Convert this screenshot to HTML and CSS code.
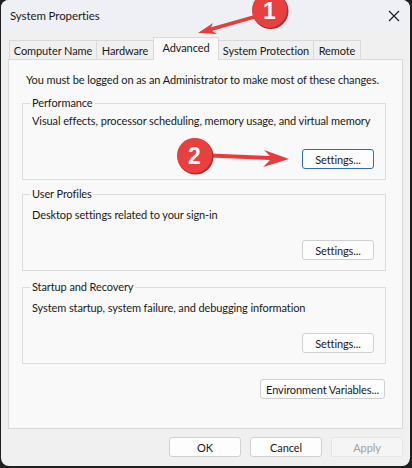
FILE: index.html
```html
<!DOCTYPE html>
<html lang="en">
<head>
    <meta charset="UTF-8">
    <meta name="viewport" content="width=device-width, initial-scale=1.0">
    <title>System Properties</title>
    <link rel="stylesheet" href="styles.css">
</head>
<body>

    <!-- Окно свойств системы -->
    <div class="window">
        <div class="titlebar">
            <span class="title">System Properties</span>
            <svg class="close" width="12" height="12" viewBox="0 0 12 12">
                <path d="M1 1 L11 11 M11 1 L1 11" stroke="#1a1a1a" stroke-width="1.1" fill="none"/>
            </svg>
        </div>

        <!-- Вкладки -->
        <div class="tabs">
            <div class="tab tab-name">Computer Name</div>
            <div class="tab tab-hw">Hardware</div>
            <div class="tab tab-active">Advanced</div>
            <div class="tab tab-prot">System Protection</div>
            <div class="tab tab-remote">Remote</div>
        </div>

        <div class="panel">
            <p class="note">You must be logged on as an Administrator to make most of these changes.</p>

            <fieldset class="group">
                <legend>Performance</legend>
                <p class="desc">Visual effects, processor scheduling, memory usage, and virtual memory</p>
                <div class="group-actions">
                    <button class="btn btn-focus">Settings...</button>
                </div>
            </fieldset>

            <fieldset class="group">
                <legend>User Profiles</legend>
                <p class="desc">Desktop settings related to your sign-in</p>
                <div class="group-actions">
                    <button class="btn">Settings...</button>
                </div>
            </fieldset>

            <fieldset class="group">
                <legend>Startup and Recovery</legend>
                <p class="desc">System startup, system failure, and debugging information</p>
                <div class="group-actions">
                    <button class="btn">Settings...</button>
                </div>
            </fieldset>

            <div class="env-row">
                <button class="btn btn-wide">Environment Variables...</button>
            </div>
        </div>

        <div class="footer">
            <button class="btn">OK</button>
            <button class="btn">Cancel</button>
            <button class="btn" disabled>Apply</button>
        </div>

        <!-- Пометки поверх окна -->
        <svg class="marks" width="412" height="468" viewBox="0 0 412 468">
            <g class="mark">
                <line x1="254" y1="17" x2="210" y2="29.5" stroke="#e53c3c" stroke-width="3.5" stroke-linecap="round"/>
                <polygon points="198,33 213,23 210,29.5 217,34" fill="#e53c3c"/>
                <circle cx="270.5" cy="11" r="18" fill="#b62a2a"/>
                <circle cx="269.5" cy="10" r="17.5" fill="#e8403f"/>
                <text x="269.5" y="19" class="mark-num">1</text>
            </g>
            <g class="mark">
                <line x1="210" y1="155.5" x2="276" y2="158.3" stroke="#e53c3c" stroke-width="4" stroke-linecap="round"/>
                <polygon points="289,159 264,150 272,158 263,167" fill="#e53c3c"/>
                <circle cx="195.5" cy="156.5" r="18" fill="#b62a2a"/>
                <circle cx="194.5" cy="155.5" r="17.5" fill="#e8403f"/>
                <text x="194.5" y="164" class="mark-num">2</text>
            </g>
        </svg>
    </div>

</body>
</html>
```

FILE: styles.css
```css
/* Общие стили */
body {
    margin: 0;
    padding: 0 2px 2px 1px;
    background: #1f1f1f;
    font-family: Lato, sans-serif;
    font-size: 11px;
    letter-spacing: -0.1px;
    color: #1a1a1a;
}
.window {
    position: relative;
    height: 466px;
    background: #f0f0f0;
    border-radius: 8px;
    overflow: hidden;
    white-space: nowrap;
}
/* Заголовок окна */
.titlebar {
    height: 31px;
    display: flex;
    align-items: center;
    justify-content: space-between;
    padding: 0 10px 0 9px;
    background: #eef0f5;
}
.title {
    line-height: 16px;
    font-size: 11.5px;
}
/* Вкладки */
.tabs {
    display: flex;
    align-items: flex-end;
    height: 28px;
    padding-left: 8px;
}
.tab {
    height: 18px;
    line-height: 19px;
    border: 1px solid #d9d9d9;
    border-bottom: none;
    border-right: none;
    text-align: center;
    background: #f0f0f0;
}
.tab-name { width: 86px; }
.tab-hw { width: 56px; }
.tab-active {
    width: 64px;
    height: 22px;
    line-height: 19px;
    background: #f9f9f9;
    border-right: 1px solid #d9d9d9;
    margin-bottom: -1px;
    position: relative;
}
.tab-prot { width: 94px; border-left: none; }
.tab-remote { width: 46px; border-right: 1px solid #d9d9d9; }
/* Панель вкладки */
.panel {
    height: 370px;
    margin: 0 7px 0 7px;
    border: 1px solid #d9d9d9;
    background: #f9f9f9;
    padding: 12px 16px 0 13px;
    box-sizing: border-box;
}
.note {
    margin: 0 0 0 4px;
    line-height: 16px;
}
.group {
    min-width: 0;
    margin: 6px 0 0 0;
    padding: 0 11px 10px 9px;
    border: 1px solid #dcdcdc;
}
.group:first-of-type {
    margin-top: 7px;
}
.group:last-of-type {
    margin-top: 8px;
}
.group legend {
    padding: 0 2px;
    margin-left: -2px;
    line-height: 16px;
}
.desc {
    margin: 5px 0 0 0;
    line-height: 16px;
}
.group:first-of-type .desc {
    margin-top: 2px;
}
.group-actions {
    display: flex;
    justify-content: flex-end;
    margin-top: 17px;
}
.group:first-of-type .group-actions {
    margin-top: 20px;
}
/* Кнопки */
.btn {
    width: 72px;
    height: 20px;
    padding: 0;
    font-family: inherit;
    font-size: 11px;
    letter-spacing: -0.1px;
    color: #1a1a1a;
    background: #fdfdfd;
    border: 1px solid #d0d0d0;
    border-radius: 3px;
    white-space: nowrap;
}
.btn-focus {
    border-color: #2a6fb5;
}
.btn-wide {
    width: 125px;
}
.btn:disabled {
    color: #a0a0a0;
    background: #f5f5f5;
    border-color: #e6e6e6;
}
.env-row {
    display: flex;
    justify-content: flex-end;
    margin: 15px 1px 0 0;
}
/* Нижние кнопки */
.footer {
    display: flex;
    justify-content: flex-end;
    gap: 9px;
    padding: 8px 7px 0 0;
}
/* Пометки */
.marks {
    position: absolute;
    left: -1px;
    top: 0;
}
.mark-num {
    fill: #fff;
    font-family: "Liberation Sans", sans-serif;
    font-weight: bold;
    font-size: 23px;
    letter-spacing: 0;
    text-anchor: middle;
}
```
